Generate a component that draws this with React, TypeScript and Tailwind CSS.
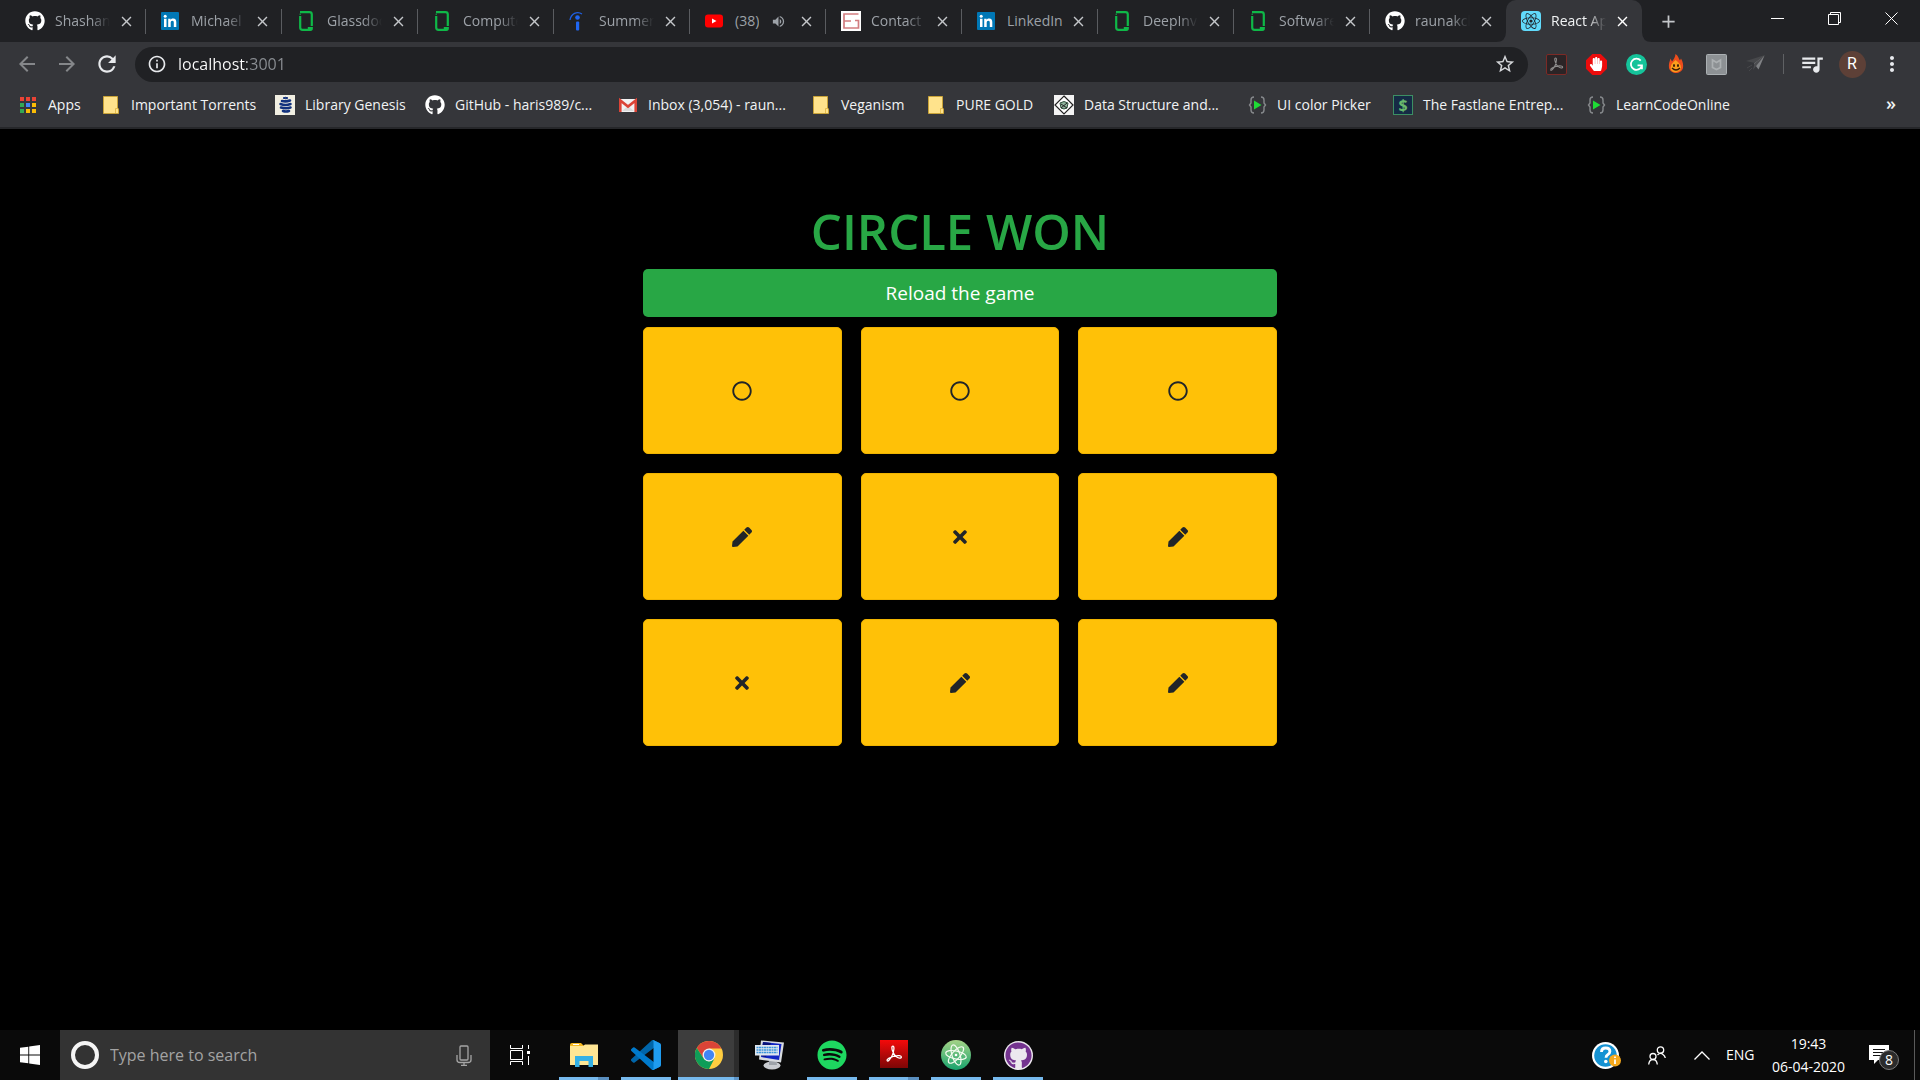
import React from 'react';
import {
  FaGithub, FaPen, FaRegCircle, FaTimes, FaSpotify, FaReact, FaHandPaper,
} from 'react-icons/fa';
import {
  MdArrowBack, MdArrowForward, MdRefresh, MdInfoOutline, MdStarBorder, MdQueueMusic, MdMoreVert, MdClose, MdAdd, MdVolumeUp,
} from 'react-icons/md';

/* ---------- favicons ---------- */

const GitHubMark = () => <FaGithub className="size-5 text-white" />;

const LinkedInMark = () => (
  <svg viewBox="0 0 20 20" className="size-5">
    <rect x="0" y="1" width="18" height="18" rx="1" fill="#0077b5" />
    <circle cx="4.2" cy="5.2" r="1.5" fill="#fff" />
    <path d="M3 7.8h2.5V16H3zM7.2 7.8h2.4v1.1c.5-.8 1.400-1.300 2.600-1.300 2.300 0 3.100 1.500 3.100 3.700V16h-2.500v-4.300c0-1.100-.3-1.900-1.400-1.900-1.200 0-1.700.8-1.700 1.900V16H7.200z" fill="#fff" />
  </svg>
);

const GlassdoorMark = () => (
  <svg viewBox="0 0 20 20" className="size-5" fill="none" stroke="#0fb848" strokeWidth="2.200">
    <path d="M3 1.200h9.500q2.300 0 2.300 2.300V15" />
    <path d="M3.200 5v11.500q0 2.300 2.300 2.300h8q1.300 0 1.300-1.600h-4" />
    <path d="M2.500 3.200h1.500" strokeWidth="1" />
  </svg>
);

const InternMark = () => (
  <svg viewBox="0 0 20 20" className="size-5">
    <path d="M1 9C2 3 8-.5 13 3" fill="none" stroke="#1f5fe0" strokeWidth="1.300" />
    <circle cx="8.500" cy="6.500" r="2.300" fill="#1f66f2" />
    <rect x="7" y="10.500" width="3.200" height="9" rx="1" fill="#1f66f2" />
  </svg>
);

const YouTubeMark = () => (
  <svg viewBox="0 0 20 20" className="size-5">
    <rect x="0" y="3.500" width="18" height="13" rx="3" fill="#f00" />
    <path d="M7 7.500v5l4.500-2.500z" fill="#fff" />
  </svg>
);

const ContactMark = () => (
  <svg viewBox="0 0 20 20" className="size-5">
    <rect width="20" height="20" fill="#fff" />
    <path d="M17.500 3H3v14h14.500V9.500H14M3 10h7" fill="none" stroke="#d27d80" strokeWidth="1.700" />
  </svg>
);

const ReactMark = () => (
  <span className="grid size-5 place-items-center rounded-sm bg-[#61dafb]">
    <FaReact className="size-[18px] text-[#20232a]" />
  </span>
);

const AppsMark = () => {
  const colors = ['#ea4335', '#ea4335', '#ea4335', '#34a853', '#4285f4', '#fbbc05', '#34a853', '#fbbc05', '#fbbc05'];
  return (
    <svg viewBox="0 0 20 20" className="size-5">
      {colors.map((c, i) => (
        <rect key={i} x={2 + (i % 3) * 6} y={2 + Math.floor(i / 3) * 6} width="4" height="4" fill={c} />
      ))}
    </svg>
  );
};

const FolderMark = () => (
  <svg viewBox="0 0 20 20" className="size-5">
    <path d="M2.500 1.500h14v11.500l1 1v4.500h-15z" fill="#ffe38c" stroke="#c9a338" strokeWidth="1" />
    <path d="M14.500 18v-4.500h2.500" fill="none" stroke="#e5bd4d" />
  </svg>
);

const LibGenMark = () => (
  <svg viewBox="0 0 20 20" className="size-5">
    <rect width="20" height="20" fill="#f1efe2" />
    <path d="M8 3q3-1.500 5 0q-2.500 1.500-5 0z" fill="#12327e" stroke="#12327e" />
    <path d="M7 6q4 1 8-.5M5.500 9q5 2 10 0M6 12.500q5 1.500 9.500 0M8 16q3 1 6 0" fill="none" stroke="#12327e" strokeWidth="2.600" strokeLinecap="round" />
  </svg>
);

const GmailMark = () => (
  <svg viewBox="0 0 20 20" className="size-5">
    <rect x="1" y="4" width="18" height="13" rx="1" fill="#f2f2f2" />
    <path d="M4 16l6-5 6 5z" fill="#dcdcdc" />
    <path d="M2.300 17V5.500L10 11.500l7.700-6V17" fill="none" stroke="#db4437" strokeWidth="2.600" />
  </svg>
);

const DataMark = () => (
  <svg viewBox="0 0 20 20" className="size-5">
    <rect width="20" height="20" fill="#f4f4f4" />
    <path d="M10 1l9 9-9 9-9-9z" fill="#fff" stroke="#222" strokeWidth="1.200" />
    <path d="M6 8q4-3 8 0l-1 5q-3 2-6 0z" fill="#8fb59d" stroke="#30513d" />
    <path d="M7 9l6 4M13 8l-6 5" stroke="#222" />
  </svg>
);

const CodeMark = () => (
  <svg viewBox="0 0 20 20" className="size-5">
    <path d="M7 2q-3 0-3 3v3l-1.500 2L4 12v3q0 3 3 3M14 2q3 0 3 3v3l1.500 2-1.500 2v3q0 3-3 3" fill="none" stroke="#86898c" strokeWidth="1.400" />
    <path d="M7 5.500v9l7.500-4.500z" fill="#1fdb35" />
  </svg>
);

const DollarMark = () => (
  <span className="grid size-5 place-items-center border border-[#3c8f63] bg-[#152b45] text-base leading-none font-bold text-[#68b96d]">$</span>
);

/* ---------- extension icons ---------- */

const Trefoil = ({ className }: { className: string }) => (
  <svg viewBox="0 0 24 24" className={className} fill="none" stroke="currentColor" strokeWidth="1.700" strokeLinejoin="round">
    <path d="M10.500 1.500c-2 0-1.500 4 0 7.500 1.800 4.200 5 8 8.800 8.500 3.500.3 3.300-2.800 0-3.200-4.800-.5-10.300 1-14.300 3.400-3.800 2.300-2.300 5.300.3 2.600C8.500 16.800 11.500 9.500 11.900 5c.1-2.200-.4-3.500-1.400-3.500z" />
  </svg>
);

const extensions: { label: string; icon: React.ReactNode }[] = [
  {
    label: 'Adobe Acrobat',
    icon: (
      <span className="grid size-[21px] place-items-center rounded-xs border border-[#7c2a26] bg-[#2b2426]">
        <Trefoil className="size-[15px] text-[#8f8c8c]" />
      </span>
    ),
  },
  {
    label: 'Ad blocker',
    icon: (
      <span className="grid place-items-center">
        <svg viewBox="0 0 20 20" className="col-start-1 row-start-1 size-[21px]"><path d="M6 0h8l6 6v8l-6 6H6l-6-6V6z" fill="#ec0c0c" /></svg>
        <FaHandPaper className="col-start-1 row-start-1 size-[14px] text-white" />
      </span>
    ),
  },
  {
    label: 'Grammarly',
    icon: (
      <svg viewBox="0 0 20 20" className="size-[21px]">
        <circle cx="10" cy="10" r="10" fill="#15c39a" />
        <path d="M14 6.300A5.300 5.300 0 1 0 15 11.500M11 10.800h4.200v3.700" fill="none" stroke="#fff" strokeWidth="1.700" />
      </svg>
    ),
  },
  {
    label: 'Flame',
    icon: (
      <svg viewBox="0 0 20 20" className="size-5">
        <path d="M9.500 0c3 2 3 4.500 4.500 6.500L15 4.500C17 8 17.500 11 17 14c-1 3.500-4 5-7 5s-6-1.500-7-5c-.5-4 .5-6 1.500-9.500L6 7.500C7.500 5.500 9.300 3.500 9.500 0z" fill="#ee4d1c" />
        <path d="M4.500 14q0-3 2-5l3-3q3 2 5 5 2 6-4.500 7.300-5 0-5.500-4.300z" fill="#fba01d" />
        <ellipse cx="8" cy="11.500" rx="1" ry="1.500" fill="#3a1c08" />
        <ellipse cx="12" cy="11.500" rx="1" ry="1.500" fill="#3a1c08" />
        <path d="M6 14q4 4 8 0" fill="none" stroke="#3a1c08" strokeWidth="1.300" />
      </svg>
    ),
  },
  {
    label: 'McAfee',
    icon: (
      <svg viewBox="0 0 21 21" className="size-[21px]">
        <rect x="0.500" y="0.500" width="20" height="20" rx="1" fill="#8d9194" stroke="#abb0b3" />
        <path d="M6.500 6l4 2.500L14.500 6v7.500l-4 2-4-2z" fill="none" stroke="#acb0b2" strokeWidth="1.700" />
      </svg>
    ),
  },
  {
    label: 'Send',
    icon: (
      <svg viewBox="0 0 20 20" className="size-5">
        <path d="M0 7L19 1 9 9z" fill="#47484b" />
        <path d="M18.500 1.500L8 9.500l4.500 6z" fill="#808285" />
        <path d="M18.500 1.500L8.500 9.500 7 16z" fill="#4b4c4f" />
        <path d="M1 14l5-3M3 17l3-3" stroke="#47484b" />
      </svg>
    ),
  },
];

/* ---------- browser ---------- */

type Tab = { title: string; icon: React.ReactNode; audio?: boolean; active?: boolean; last?: boolean };

const tabs: Tab[] = [
  { title: 'Shashank', icon: <GitHubMark /> },
  { title: 'Michael C', icon: <LinkedInMark /> },
  { title: 'Glassdoor', icon: <GlassdoorMark /> },
  { title: 'Computer', icon: <GlassdoorMark /> },
  { title: 'Summer i', icon: <InternMark /> },
  { title: '(38)', icon: <YouTubeMark />, audio: true },
  { title: 'Contact U', icon: <ContactMark /> },
  { title: 'LinkedIn', icon: <LinkedInMark /> },
  { title: 'DeepInve', icon: <GlassdoorMark /> },
  { title: 'Software', icon: <GlassdoorMark /> },
  { title: 'raunakch', icon: <GitHubMark />, last: true },
  { title: 'React App', icon: <ReactMark />, active: true },
];

function BrowserTab({ tab }: { tab: Tab }) {
  const shape = tab.active
    ? 'rounded-t-[10px] bg-[#35363a] text-[#f1f3f4]'
    : 'text-[#9da2a8]';
  return (
    <div className={`relative flex h-[42px] w-34 items-center gap-[10px] pr-[10px] pl-[15px] ${shape}`}>
      {tab.icon}
      <span className="flex min-w-0 flex-1 items-center">
        <span className={`overflow-hidden whitespace-nowrap text-sm ${tab.audio || tab.title === 'LinkedIn' ? '' : '[mask-image:linear-gradient(to_right,black_65%,transparent)]'}`}>
          {tab.title}
        </span>
        {tab.audio && <MdVolumeUp className="ml-3 size-[15px] shrink-0" />}
      </span>
      <button aria-label={`Close ${tab.title}`} className={`-ml-1 grid size-5 place-items-center ${tab.active ? 'text-white' : 'text-[#c4c7ca]'}`}>
        <MdClose className="size-[17px]" />
      </button>
      {!tab.active && !tab.last && <span className="absolute top-[9px] right-0 h-[25px] w-px bg-[#5a5c60]" />}
      {tab.active && (
        <>
          <svg viewBox="0 0 10 10" className="absolute bottom-0 -left-[10px] size-[10px]"><path d="M10 0v10H0q10 0 10-10z" fill="#35363a" /></svg>
          <svg viewBox="0 0 10 10" className="absolute -right-[10px] bottom-0 size-[10px]"><path d="M0 0v10h10Q0 10 0 0z" fill="#35363a" /></svg>
        </>
      )}
    </div>
  );
}

function TabStrip() {
  return (
    <div className="flex h-[42px] bg-[#202124] pl-[10px]">
      {tabs.map((t) => <BrowserTab key={t.title} tab={t} />)}
      <button aria-label="New tab" className="ml-3 grid w-7 place-items-center text-[#c4c7ca]">
        <MdAdd className="size-[21px]" />
      </button>
      <div className="ml-auto flex h-9 text-white">
        <button aria-label="Minimize" className="grid w-[57px] place-items-center">
          <span className="h-px w-[13px] bg-white" />
        </button>
        <button aria-label="Restore" className="grid w-[57px] place-items-center">
          <svg viewBox="0 0 13 13" className="size-[13px]" fill="none" stroke="currentColor"><path d="M.5 2.500h10v10H.5zM2.500 2.500v-2h10v10h-2" /></svg>
        </button>
        <button aria-label="Close" className="grid w-[57px] place-items-center">
          <svg viewBox="0 0 13 13" className="size-[13px]" stroke="currentColor"><path d="M.5.5l12 12M12.500.5l-12 12" /></svg>
        </button>
      </div>
    </div>
  );
}

function Toolbar() {
  return (
    <div className="flex h-11 items-center pr-2 pl-[7px] text-[#e8eaed]">
      <button aria-label="Back" className="grid w-10 place-items-center text-[#85878a]"><MdArrowBack className="size-6" /></button>
      <button aria-label="Forward" className="grid w-10 place-items-center text-[#85878a]"><MdArrowForward className="size-6" /></button>
      <button aria-label="Reload" className="grid w-10 place-items-center"><MdRefresh className="size-[26px]" /></button>
      <form className="mx-2 flex h-[35px] flex-1 items-center gap-[11px] rounded-full bg-[#202124] pr-3 pl-3">
        <MdInfoOutline className="size-5" />
        <input
          aria-label="Address"
          defaultValue="localhost:3001"
          className="min-w-0 flex-1 bg-[linear-gradient(to_right,#fff_69px,#8b8f94_69px)] bg-clip-text text-base text-transparent outline-none"
        />
        <button type="button" aria-label="Bookmark this page"><MdStarBorder className="size-[22px] text-[#d5d7da]" /></button>
      </form>
      {extensions.map((e) => (
        <button key={e.label} aria-label={e.label} className="grid w-10 place-items-center">{e.icon}</button>
      ))}
      <span className="mr-2 ml-[7px] h-5 w-px bg-[#5f6164]" />
      <button aria-label="Media" className="grid w-10 place-items-center"><MdQueueMusic className="size-[26px]" /></button>
      <button className="grid w-10 place-items-center">
        <span className="grid size-[27px] place-items-center rounded-full bg-[#5d4037] font-[Roboto] text-base text-white">R</span>
      </button>
      <button aria-label="Menu" className="grid w-10 place-items-center"><MdMoreVert className="size-6" /></button>
    </div>
  );
}

const bookmarks: { label: string; icon: React.ReactNode; width: string }[] = [
  { label: 'Apps', icon: <AppsMark />, width: 'w-[83px]' },
  { label: 'Important Torrents', icon: <FolderMark />, width: 'w-[174px]' },
  { label: 'Library Genesis', icon: <LibGenMark />, width: 'w-[150px]' },
  { label: 'GitHub - haris989/c...', icon: <GitHubMark />, width: 'w-[193px]' },
  { label: 'Inbox (3,054) - raun...', icon: <GmailMark />, width: 'w-[193px]' },
  { label: 'Veganism', icon: <FolderMark />, width: 'w-[115px]' },
  { label: 'PURE GOLD', icon: <FolderMark />, width: 'w-[128px]' },
  { label: 'Data Structure and...', icon: <DataMark />, width: 'w-[193px]' },
  { label: 'UI color Picker', icon: <CodeMark />, width: 'w-[146px]' },
  { label: 'The Fastlane Entrep...', icon: <DollarMark />, width: 'w-[193px]' },
  { label: 'LearnCodeOnline', icon: <CodeMark />, width: 'w-[150px]' },
];

function BookmarksBar() {
  return (
    <nav className="flex h-[43px] items-center border-b-2 border-[#26272a] pr-6 pb-[3px] pl-[18px] text-sm text-[#f1f3f4]">
      {bookmarks.map((b) => (
        <a key={b.label} href="#" className={`flex shrink-0 items-center gap-[10px] whitespace-nowrap ${b.width}`}>
          {b.icon}
          {b.label}
        </a>
      ))}
      <button aria-label="More bookmarks" className="ml-auto pb-1 text-lg leading-5 font-semibold">»</button>
    </nav>
  );
}

/* ---------- game ---------- */

type Mark = 'circle' | 'cross' | 'empty';
const board: Mark[] = ['circle', 'circle', 'circle', 'empty', 'cross', 'empty', 'cross', 'empty', 'empty'];
const markIcon: Record<Mark, React.ReactNode> = {
  circle: <FaRegCircle />,
  cross: <FaTimes />,
  empty: <FaPen />,
};

function Game() {
  return (
    <main className="flex flex-1 flex-col items-center bg-black pt-[72px]">
      <div className="w-[33%]">
        <h1 className="mb-2 text-center text-[49px] leading-[60px] font-semibold text-[#28a745]">CIRCLE WON</h1>
        <button className="mb-[10px] h-12 w-full rounded-[5px] bg-[#28a745] text-[19px] text-white">Reload the game</button>
        <div className="grid grid-cols-3 gap-[19px]">
          {board.map((m, i) => (
            <button key={i} aria-label={`Square ${i + 1}: ${m}`} className="grid h-[127px] place-items-center rounded-[5px] border border-[#f0b400] bg-[#ffc107] text-xl text-[#212529]">
              {markIcon[m]}
            </button>
          ))}
        </div>
      </div>
    </main>
  );
}

/* ---------- taskbar ---------- */

const ExplorerIcon = () => (
  <svg viewBox="0 0 28 24" className="h-6 w-7">
    <path d="M0 2q0-2 2-2h9l3 3H0z" fill="#f5b81f" />
    <path d="M0 3h13l2-1.500h13V22H0z" fill="#ffe694" />
    <path d="M3 1.500h6" stroke="#fff" />
    <path d="M5 24V13h18v11h-4.500v-6h-9v6z" fill="#35b1e6" />
  </svg>
);

const VSCodeIcon = () => (
  <svg viewBox="0 0 100 100" className="size-[30px]">
    <path fill="#0065a9" d="M96.461 10.796L75.857.876a6.230 6.230 0 0 0-7.107 1.207L1.299 63.583a4.167 4.167 0 0 0 .004 6.162l5.510 5.009a4.167 4.167 0 0 0 5.321.236l81.227-61.620C96.086 11.303 100 13.246 100 16.667v-.24a6.250 6.250 0 0 0-3.539-5.631z" />
    <path fill="#007acc" d="M96.461 89.204l-20.604 9.920a6.230 6.230 0 0 1-7.107-1.207L1.299 36.417a4.167 4.167 0 0 1 .004-6.162l5.510-5.009a4.167 4.167 0 0 1 5.321-.236l81.227 61.620c2.725 2.067 6.639.124 6.639-3.297v.24a6.250 6.250 0 0 1-3.539 5.631z" />
    <path fill="#1f9cf0" d="M75.858 99.126a6.232 6.232 0 0 1-7.108-1.210c2.306 2.307 6.250.674 6.250-2.588V4.672C75 1.410 71.056-.223 68.750 2.083a6.232 6.232 0 0 1 7.108-1.210l20.601 9.907A6.250 6.250 0 0 1 100 16.413v67.174a6.250 6.250 0 0 1-3.541 5.633z" />
  </svg>
);

const ChromeIcon = () => (
  <svg viewBox="0 0 48 48" className="size-7">
    <circle cx="24" cy="24" r="24" fill="#ffcd40" />
    <path d="M24 13h21.300a24 24 0 0 0-42.100-1l11.300 17.500z" fill="#db4437" />
    <path d="M3.200 12A24 24 0 0 0 24 48l9.600-18.500L24 35l-9.500-5.500z" fill="#0f9d58" />
    <circle cx="24" cy="24" r="11" fill="#f1f1f1" />
    <circle cx="24" cy="24" r="8.800" fill="#4285f4" />
  </svg>
);

const ComputerIcon = () => (
  <svg viewBox="0 0 30 30" className="size-[30px]">
    <ellipse cx="17" cy="25.500" rx="8.500" ry="4" fill="#c9ccd1" />
    <path d="M14 20h7l1 5h-8z" fill="#9ea3aa" />
    <path d="M6 .5l23 2-3 20-22-3z" fill="#d9dce0" />
    <path d="M8 2l18.500 2-2.500 16L6 17z" fill="#1226c4" />
    <path d="M8 2l8 1-5 14-5-1z" fill="#0a1378" />
    <rect x="0" y="5" width="24" height="10.500" fill="#dfe6ee" />
    <path d="M1.500 7.500h21M1.500 10h21M1.500 12.500h21" stroke="#3b95dc" strokeWidth="1.700" strokeDasharray="2 .5" />
  </svg>
);

const AcrobatIcon = () => (
  <span className="mb-[3px] grid size-7 place-items-center bg-linear-to-b from-[#f50a0a] to-[#7d0606]">
    <Trefoil className="size-[18px] text-white" />
  </span>
);

const AtomIcon = () => (
  <svg viewBox="0 0 30 30" className="size-[30px]">
    <defs><linearGradient id="atom" x1="0" y1="0" x2="0" y2="1"><stop offset="0" stopColor="#a5d387" /><stop offset="1" stopColor="#17a36d" /></linearGradient></defs>
    <circle cx="15" cy="15" r="15" fill="url(#atom)" />
    <g fill="none" stroke="#f4fbf0" strokeWidth="1.200">
      <ellipse cx="15" cy="15" rx="10.500" ry="4" transform="rotate(12 15 15)" />
      <ellipse cx="15" cy="15" rx="10.500" ry="4" transform="rotate(72 15 15)" />
      <ellipse cx="15" cy="15" rx="10.500" ry="4" transform="rotate(132 15 15)" />
    </g>
    <circle cx="15" cy="15" r="1.300" fill="#fff" />
  </svg>
);

const GitHubDesktopIcon = () => (
  <span className="grid size-[29px] place-items-center rounded-full bg-[#ece8ee]">
    <FaGithub className="size-[27px] text-[#74338f]" />
  </span>
);

type TaskApp = { label: string; icon: React.ReactNode; state: 'running' | 'stacked' | 'active' | 'idle' };
const apps: TaskApp[] = [
  { label: 'File Explorer', icon: <ExplorerIcon />, state: 'stacked' },
  { label: 'Visual Studio Code', icon: <VSCodeIcon />, state: 'running' },
  { label: 'Chrome', icon: <ChromeIcon />, state: 'active' },
  { label: 'Remote Desktop', icon: <ComputerIcon />, state: 'idle' },
  { label: 'Spotify', icon: <FaSpotify className="size-[30px] text-[#1ed760]" />, state: 'running' },
  { label: 'Acrobat Reader', icon: <AcrobatIcon />, state: 'stacked' },
  { label: 'Atom', icon: <AtomIcon />, state: 'running' },
  { label: 'GitHub Desktop', icon: <GitHubDesktopIcon />, state: 'running' },
];
const indicator: Record<TaskApp['state'], string> = {
  running: 'mx-[6px] bg-[#76b9ed]',
  stacked: 'mx-[6px] border-r-[11px] border-[#5a8fc0] bg-[#76b9ed]',
  active: 'border-r-[5px] border-[#5e96c8] bg-[#76b9ed]',
  idle: '',
};

function Taskbar() {
  return (
    <footer className="flex h-[50px] bg-[#0a0a0a] text-white">
      <button aria-label="Start" className="grid w-15 place-items-center">
        <svg viewBox="0 0 20 20" className="size-5" fill="#fff"><path d="M0 2.800L8.300 1.700v7.800H0zM9.200 1.500L20 0v9.500H9.200zM0 10.400h8.300v7.900L0 17.200zM9.200 10.400H20V20L9.200 18.500z" /></svg>
      </button>
      <form className="flex w-[430px] items-center gap-[11px] bg-[#333] pr-[18px] pl-[11px]">
        <span className="size-7 shrink-0 rounded-full border-4 border-[#f5f5f5]" />
        <input aria-label="Search" placeholder="Type here to search" className="min-w-0 flex-1 text-base outline-none placeholder:text-[#a3a3a3]" />
        <svg viewBox="0 0 16 21" className="h-[21px] w-4" fill="none" stroke="#a5a5a5" strokeWidth="1.300"><rect x="4" y="1" width="8" height="14" rx="1" /><path d="M1 10v5q0 2.500 3 2.500h8q3 0 3-2.500v-5M8 17.500v3M5 20.300h6" /></svg>
      </form>
      <button aria-label="Task View" className="grid w-15 place-items-center">
        <svg viewBox="0 0 20 20" className="size-5" fill="none" stroke="#fff"><path d="M.5 0v3.500h12V0M.5 20v-3.500h12V20M.5 5.500h12v9H.5zM18.500 0v4M18.500 11v9" /><rect x="17" y="6" width="3" height="3" fill="#fff" stroke="none" /></svg>
      </button>
      <div className="ml-[3px] flex">
        {apps.map((a) => (
          <button key={a.label} aria-label={a.label} className={`flex w-[62px] flex-col ${a.state === 'active' ? 'border-l border-[#0a0a0a] bg-linear-to-r from-[#3d3d3d] from-92% to-[#2c2c2c] to-92%' : ''}`}>
            <span className="grid w-full flex-1 place-items-center pt-[3px]">{a.icon}</span>
            <span className={`h-[3px] self-stretch ${indicator[a.state]}`} />
          </button>
        ))}
      </div>
      <div className="ml-auto flex items-center">
        <button aria-label="Help" className="mr-[27px] size-[29px]">
          <svg viewBox="0 0 29 29" className="size-[29px]">
            <circle cx="13.500" cy="14.500" r="13.500" fill="#fff" />
            <circle cx="13.500" cy="14.500" r="11.300" fill="#1592d3" />
            <path d="M9.500 11q0-4 4.200-4t4.200 3.600q0 2-2.200 3.200-1.700 1-1.700 3" fill="none" stroke="#fff" strokeWidth="2.800" />
            <circle cx="13.800" cy="20.500" r="1.800" fill="#fff" />
            <circle cx="23" cy="19.500" r="6" fill="#f5a81c" />
            <path d="M23 18.500v4.500M23 15.500v1.600" stroke="#fff" strokeWidth="1.800" />
          </svg>
        </button>
        <button aria-label="People" className="mr-7">
          <svg viewBox="0 0 18 19" className="h-[19px] w-[18px]" fill="none" stroke="#fff" strokeWidth="1.300"><circle cx="12.500" cy="4" r="3.200" /><path d="M9.500 9q3-3 5.500-.5Q17 10 17.300 12" /><circle cx="5" cy="10.500" r="3" /><path d="M.7 18.500q.5-5 4.300-5t4.300 5" /></svg>
        </button>
        <button aria-label="Show hidden icons" className="mr-4">
          <svg viewBox="0 0 16 9" className="h-[9px] w-4" fill="none" stroke="#fff" strokeWidth="1.300"><path d="M.5 8.500L8 1l7.500 7.500" /></svg>
        </button>
        <button className="w-7 text-sm">ENG</button>
        <button className="mr-[22px] ml-4 w-[77px] text-center text-sm leading-[23px] whitespace-nowrap">
          <span className="block">19:43</span>
          <span className="block">06-04-2020</span>
        </button>
        <button aria-label="Notifications" className="relative mr-[15px] h-[30px] w-[30px]">
          <svg viewBox="0 0 20 20" className="size-5"><path d="M0 0h20v15H9l-4 4v-4H0z" fill="#fff" /><path d="M4 4.500h12M4 7.500h12M4 10.500h12" stroke="#111" /></svg>
          <span className="absolute right-0 bottom-0 grid size-5 place-items-center rounded-full border border-[#7a7a7a] bg-[#2b2b2b] text-sm leading-none">8</span>
        </button>
        <span className="mr-[5px] h-[50px] w-px bg-[#5a5a5a]" />
      </div>
    </footer>
  );
}

export default function App() {
  return (
    <div className="flex min-h-screen flex-col bg-black font-['Open_Sans','Noto_Sans',sans-serif]">
      <header className="bg-[#35363a]">
        <TabStrip />
        <Toolbar />
        <BookmarksBar />
      </header>
      <Game />
      <Taskbar />
    </div>
  );
}
